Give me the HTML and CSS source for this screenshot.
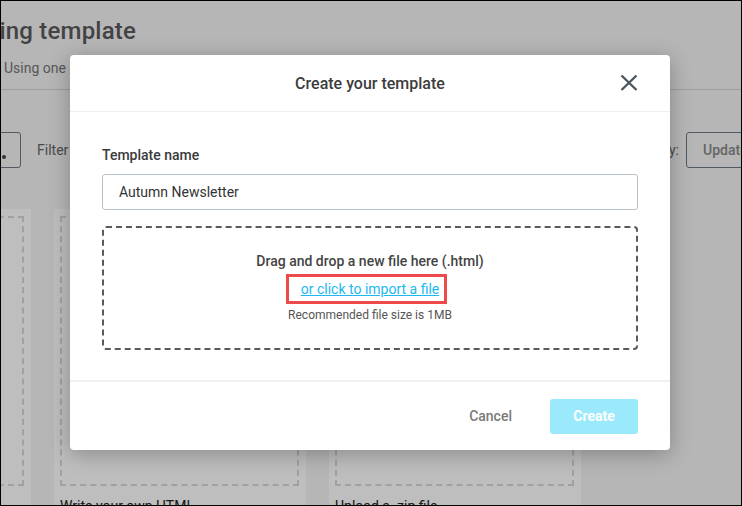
FILE: index.html
```html
<!DOCTYPE html>
<html>
<head>
<meta charset="utf-8">
<link rel="stylesheet" href="styles.css">
</head>
<body>
<div class="screen">
  <div class="page">
    <h1 class="page-title">Using template</h1>
    <p class="page-sub">Using one of our templates or your own code</p>
    <div class="rule"></div>
    <div class="toolbar">
      <div class="tool-left">
        <button class="tool-btn"><span class="tool-dot"></span></button>
        <span class="tool-label">Filter</span>
      </div>
      <div class="tool-right">
        <span class="tool-label">Sort by:</span>
        <button class="tool-btn tool-btn-text">Updated</button>
      </div>
    </div>
    <div class="cards">
      <div class="card"><div class="card-drop"></div><div class="card-name">Start from scratch</div></div>
      <div class="card"><div class="card-drop"></div><div class="card-name">Write your own HTML</div></div>
      <div class="card"><div class="card-drop"></div><div class="card-name">Upload a .zip file</div></div>
    </div>
  </div>
  <div class="overlay"></div>
  <div class="modal">
    <div class="modal-head">
      <h2 class="modal-title">Create your template</h2>
      <button class="modal-close" aria-label="Close">
        <svg width="18" height="18" viewBox="0 0 18 18"><path d="M1.5 1.5 L16.5 16 M16.5 1.5 L1.5 16" stroke="#4b5661" stroke-width="2.4" stroke-linecap="butt" fill="none"/></svg>
      </button>
    </div>
    <div class="modal-body">
      <label class="field-label">Template name</label>
      <div class="field-input">Autumn Newsletter</div>
      <div class="dropzone">
        <div class="drop-main">Drag and drop a new file here (.html)</div>
        <div class="drop-link-row"><span class="highlight"><a class="drop-link" href="#">or click to import a file</a></span></div>
        <div class="drop-hint">Recommended file size is 1MB</div>
      </div>
    </div>
    <div class="modal-foot">
      <button class="btn-cancel">Cancel</button>
      <button class="btn-create">Create</button>
    </div>
  </div>
</div>
</body>
</html>
```

FILE: styles.css
```css
* { box-sizing: border-box; }
html, body { margin: 0; padding: 0; }
body { font-family: Roboto, "Liberation Sans", Arial, sans-serif; background: #fff; }

.screen {
  width: 742px;
  height: 506px;
  border: 1px solid #000;
  position: relative;
  overflow: hidden;
  background: #f4f4f6;
}

.page { display: flex; flex-direction: column; }

.page-title {
  margin: 14px 0 0 -30px;
  font-size: 24px;
  line-height: 32px;
  font-weight: 500;
  color: #5a5a5c;
  white-space: nowrap;
  letter-spacing: 0.2px;
}
.page-sub {
  margin: 11px 0 0 3px;
  font-size: 14px;
  line-height: 20px;
  color: #777;
  white-space: nowrap;
}
.rule { margin-top: 11px; height: 1px; background: #d4d4d6; }

.toolbar {
  margin-top: 42px;
  height: 36px;
  display: flex;
  justify-content: space-between;
  align-items: center;
}
.tool-left, .tool-right { display: flex; align-items: center; gap: 16px; }
.tool-left { margin-left: -20px; }
.tool-right { margin-right: -60px; gap: 7px; }
.tool-btn {
  height: 36px;
  width: 40px;
  border: 1px solid #6f7882;
  border-radius: 3px;
  background: #f4f4f6;
  position: relative;
  padding: 0;
  font-family: inherit;
}
.tool-dot {
  position: absolute;
  left: 20px; top: 22px;
  width: 4px; height: 4px;
  border-radius: 50%;
  background: #444;
}
.tool-btn-text {
  width: 115px;
  text-align: left;
  padding-left: 16px;
  font-size: 14px;
  font-weight: 500;
  color: #888;
}
.tool-label { font-size: 14px; color: #666; white-space: nowrap; }

.cards {
  margin-top: 41px;
  margin-left: -222px;
  display: flex;
  gap: 23px;
}
.card {
  flex: 0 0 252px;
  background: #fff;
  padding: 7px 7px 0 6px;
}
.card-drop {
  height: 270px;
  border: 2px dashed #d8d8da;
}
.card-name {
  margin-top: 10px;
  font-size: 14px;
  line-height: 20px;
  color: #222;
  white-space: nowrap;
}

.overlay {
  position: absolute;
  inset: 0;
  background: rgba(0, 0, 0, 0.255);
}

.modal {
  position: absolute;
  left: 69px;
  top: 54px;
  width: 600px;
  height: 395px;
  background: #fff;
  border-radius: 4px;
  box-shadow: 0 4px 22px rgba(0, 0, 0, 0.28);
  display: flex;
  flex-direction: column;
}
.modal-head {
  height: 57px;
  border-bottom: 1px solid #efefef;
  display: flex;
  align-items: center;
  justify-content: center;
  position: relative;
}
.modal-title {
  margin: 0;
  font-size: 16px;
  font-weight: 500;
  color: #3c3c3c;
  padding-top: 1px;
}
.modal-close {
  position: absolute;
  right: 32px;
  top: 19px;
  width: 18px;
  height: 18px;
  padding: 0;
  border: 0;
  background: none;
  display: flex;
}

.modal-body {
  height: 270px;
  padding: 33px 32px 0 32px;
  border-bottom: 2px solid #f0f0f0;
  display: flex;
  flex-direction: column;
}
.field-label {
  font-size: 14px;
  line-height: 20px;
  font-weight: 500;
  color: #3a3a3a;
}
.field-input {
  margin-top: 9px;
  height: 36px;
  border: 1px solid #b9c1c9;
  border-radius: 3px;
  padding: 0 16px;
  font-size: 14px;
  line-height: 34px;
  color: #333;
}
.dropzone {
  margin-top: 16px;
  height: 124px;
  border: 2px dashed #5a5a5a;
  border-radius: 4px;
  padding-top: 23px;
  display: flex;
  flex-direction: column;
  align-items: center;
}
.drop-main {
  font-size: 14px;
  line-height: 20px;
  font-weight: 500;
  color: #444;
}
.drop-link-row { margin-top: 3px; }
.highlight {
  display: inline-block;
  border: 3px solid #ef4a4a;
  padding: 2px 5px 2px 12px;
  margin-left: -7px;
}
.drop-link {
  display: block;
  font-size: 14px;
  line-height: 20px;
  color: #1cb8ee;
  text-decoration: underline;
}
.drop-hint {
  margin-top: 3px;
  font-size: 12px;
  line-height: 16px;
  color: #555;
}

.modal-foot {
  flex: 1;
  display: flex;
  align-items: center;
  justify-content: flex-end;
  padding: 0 32px 0 0;
  gap: 22px;
}
.btn-cancel {
  border: 0;
  background: none;
  font-family: inherit;
  font-size: 14px;
  font-weight: 500;
  color: #7a7a7a;
  padding: 0 16px;
  height: 35px;
}
.btn-create {
  width: 88px;
  height: 35px;
  border: 0;
  border-radius: 3px;
  background: #9beafc;
  color: #fff;
  font-family: inherit;
  font-size: 14px;
  font-weight: 700;
}
```
